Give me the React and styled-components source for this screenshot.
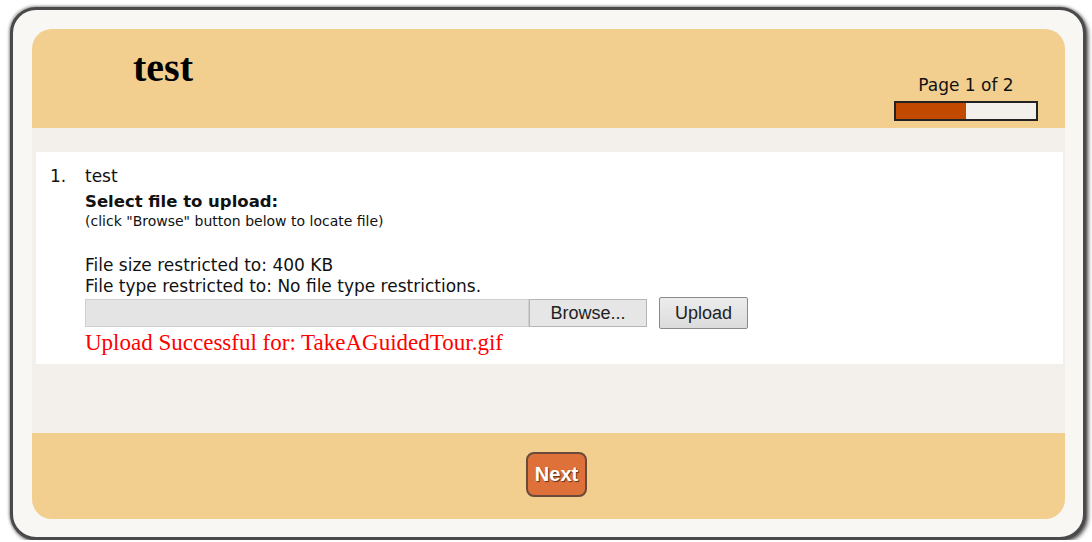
import React from "react";
import styled, { createGlobalStyle } from "styled-components";

const GlobalStyle = createGlobalStyle`
  html, body {
    margin: 0;
    padding: 0;
    background: #ffffff;
  }
`;

function App() {
  return (
    <>
      <GlobalStyle />
      <Frame>
        <Panel>
          <Header>
            <Title>test</Title>
            <PageInfo>
              <PageLabel>Page 1 of 2</PageLabel>
              <Progress>
                <ProgressFill style={{ width: `${(1 / 2) * 100}%` }} />
              </Progress>
            </PageInfo>
          </Header>

          <Body>
            <Question>
              <Number>1.</Number>
              <Content>
                <QuestionText>test</QuestionText>
                <Prompt>Select file to upload:</Prompt>
                <Hint>(click "Browse" button below to locate file)</Hint>
                <Limits>
                  <div>File size restricted to: 400 KB</div>
                  <div>File type restricted to: No file type restrictions.</div>
                </Limits>
                <UploadRow>
                  <FileBox>
                    <FilePath />
                    <BrowseButton>Browse...</BrowseButton>
                  </FileBox>
                  <UploadButton>Upload</UploadButton>
                </UploadRow>
                <Success>Upload Successful for: TakeAGuidedTour.gif</Success>
              </Content>
            </Question>
          </Body>

          <Footer>
            <NextButton>Next</NextButton>
          </Footer>
        </Panel>
      </Frame>
    </>
  );
}

export default App;

const Frame = styled.div`
  box-sizing: border-box;
  width: 1076px;
  height: 533px;
  margin: 7px 0 0 10px;
  padding: 19px 18px 18px 19px;
  background: #f8f7f4;
  border: 3px solid #4a4a4a;
  border-radius: 26px;
  box-shadow: 2px 2px 4px rgba(0, 0, 0, 0.75), -1px -1px 3px rgba(0, 0, 0, 0.35);
`;

const Panel = styled.div`
  display: flex;
  flex-direction: column;
  height: 100%;
  background: #f3f0eb;
  border-radius: 20px;
  overflow: hidden;
`;

const Header = styled.div`
  display: flex;
  justify-content: space-between;
  align-items: flex-end;
  height: 99px;
  box-sizing: border-box;
  padding: 0 27px 7px 101px;
  background: #f2cf8f;
`;

const Title = styled.h1`
  align-self: flex-start;
  margin: 15px 0 0;
  font-family: "Liberation Serif", serif;
  font-size: 40px;
  font-weight: bold;
  color: #000;
`;

const PageInfo = styled.div`
  display: flex;
  flex-direction: column;
  align-items: center;
  gap: 6px;
`;

const PageLabel = styled.div`
  font-family: "DejaVu Sans", sans-serif;
  font-size: 17px;
  line-height: 20px;
  color: #111;
`;

const Progress = styled.div`
  width: 140px;
  height: 16px;
  border: 2px solid #222;
  background: #f3f0eb;
`;

const ProgressFill = styled.div`
  height: 100%;
  background: #c24a00;
`;

const Body = styled.div`
  flex: 1;
  padding: 24px 2px 69px 4px;
`;

const Question = styled.div`
  display: flex;
  height: 212px;
  box-sizing: border-box;
  padding: 14px 0 0 14px;
  background: #ffffff;
  font-family: "DejaVu Sans", sans-serif;
  font-size: 17px;
  line-height: 21px;
  color: #111;
`;

const Number = styled.div`
  width: 35px;
`;

const Content = styled.div`
  display: flex;
  flex-direction: column;
`;

const QuestionText = styled.div``;

const Prompt = styled.div`
  margin-top: 4px;
  font-weight: bold;
  font-size: 16.5px;
`;

const Hint = styled.div`
  margin-top: 1px;
  font-size: 14px;
  line-height: 16px;
`;

const Limits = styled.div`
  margin-top: 26px;
`;

const UploadRow = styled.div`
  display: flex;
  align-items: center;
  gap: 12px;
`;

const FileBox = styled.div`
  display: flex;
  height: 28px;
`;

const FilePath = styled.div`
  width: 444px;
  box-sizing: border-box;
  background: #e4e4e4;
  border: 1px solid #cfcfcf;
`;

const BrowseButton = styled.div`
  display: flex;
  align-items: center;
  justify-content: center;
  width: 118px;
  box-sizing: border-box;
  background: #e6e6e6;
  border: 1px solid #b5b5b5;
  font-family: "Liberation Sans", sans-serif;
  font-size: 18px;
  color: #222;
`;

const UploadButton = styled.div`
  display: flex;
  align-items: center;
  justify-content: center;
  width: 89px;
  height: 32px;
  box-sizing: border-box;
  background: linear-gradient(#ececec, #dcdcdc);
  border: 1px solid #8a8a8a;
  border-radius: 2px;
  font-family: "Liberation Sans", sans-serif;
  font-size: 18px;
  color: #222;
`;

const Success = styled.div`
  margin-top: 2px;
  font-family: "Liberation Serif", serif;
  font-size: 23px;
  line-height: 24px;
  color: #ff0000;
`;

const Footer = styled.div`
  display: flex;
  justify-content: center;
  align-items: center;
  height: 86px;
  box-sizing: border-box;
  padding: 0 0 3px 16px;
  background: #f2cf8f;
`;

const NextButton = styled.div`
  display: flex;
  align-items: center;
  justify-content: center;
  width: 61px;
  height: 45px;
  box-sizing: border-box;
  background: #de713a;
  border: 2px solid #6a4a3a;
  border-radius: 8px;
  font-family: "Liberation Sans", sans-serif;
  font-size: 20px;
  font-weight: bold;
  color: #ffffff;
  text-shadow: 1px 1px 1px rgba(60, 30, 10, 0.8);
`;
